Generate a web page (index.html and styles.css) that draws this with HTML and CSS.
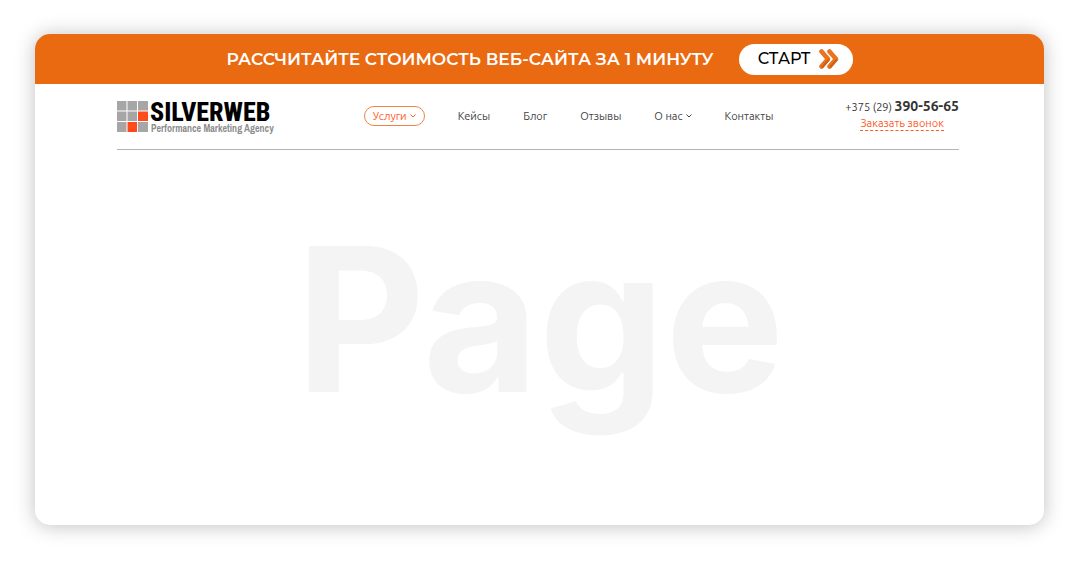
FILE: index.html
```html
<!DOCTYPE html>
<html lang="ru">
<head>
<meta charset="utf-8">
<meta name="viewport" content="width=device-width, initial-scale=1">
<title>SILVERWEB</title>
<link rel="stylesheet" href="styles.css">
</head>
<body>
<div class="card">
  <div class="banner">
    <span class="banner-text">РАССЧИТАЙТЕ СТОИМОСТЬ ВЕБ-САЙТА ЗА 1 МИНУТУ</span>
    <button class="start" type="button">СТАРТ
      <svg class="start-icon" width="20" height="20" viewBox="0 0 20 20" fill="none" stroke="#e9741f" stroke-width="4.600" stroke-linecap="round" stroke-linejoin="round"><path d="M2.500 2.500 9 10 2.500 17.500M10.500 2.500 17 10 10.500 17.500"/><path d="M9.500 11 3.500 18M17.500 11 11.500 18" stroke="#cf6016" stroke-width="2"/></svg>
    </button>
  </div>
  <header class="header">
    <a class="logo" href="#">
      <svg class="logo-mark" width="31" height="31" viewBox="0 0 31 31"><path fill="#a6a6a6" d="M0 0h9.500v9.500H0zM10.500 0H20v9.500h-9.500zM21 0h10v9.500H21zM0 10.500h9.500V20H0zM10.500 10.500H20V20h-9.500zM0 21h9.500v10H0zM21 21h10v10H21z"/><path fill="#ff4a1c" d="M21 10.500h10V20H21zM10.500 21H20v10h-9.500z"/></svg>
      <span class="logo-words"><span class="logo-name">SILVERWEB</span><span class="logo-tag">Performance Marketing Agency</span></span>
    </a>
    <nav class="nav">
      <a class="nav-link nav-active" href="#">Услуги<svg class="chevron" width="6" height="4" viewBox="0 0 6 4"><path d="M.5.500 3 3 5.500.500" fill="none" stroke="currentColor"/></svg></a>
      <a class="nav-link" href="#">Кейсы</a>
      <a class="nav-link" href="#">Блог</a>
      <a class="nav-link" href="#">Отзывы</a>
      <a class="nav-link" href="#">О нас<svg class="chevron" width="6" height="4" viewBox="0 0 6 4"><path d="M.5.500 3 3 5.500.500" fill="none" stroke="currentColor"/></svg></a>
      <a class="nav-link" href="#">Контакты</a>
    </nav>
    <div class="contact">
      <a class="phone" href="tel:+375293905665">+375 (29) <b class="phone-number">390-56-65</b></a>
      <a class="callback" href="#">Заказать звонок</a>
    </div>
  </header>
  <main class="content">Page</main>
</div>
</body>
</html>
```
FILE: styles.css
```css
* { box-sizing: border-box; }
body {
  margin: 0;
  min-height: 100vh;
  padding: 34px 36px 39px 35px;
  display: flex;
  background: #fff;
  color: #444;
  font-family: "Ubuntu", "Roboto", sans-serif;
  font-size: 11px;
}
a { color: inherit; text-decoration: none; }
.card {
  flex: 1;
  display: flex;
  flex-direction: column;
  overflow: hidden;
  border-radius: 15px;
  background: #fff;
  box-shadow: 0 1px 20px rgba(0, 0, 0, 0.25);
}
.banner {
  display: flex;
  align-items: center;
  justify-content: center;
  gap: 25px;
  height: 50px;
  background: #ea6a12;
}
.banner-text {
  color: #fff;
  font: 600 17px/24px "Montserrat", "Lato", sans-serif;
}
.start {
  display: flex;
  align-items: center;
  gap: 8px;
  height: 31px;
  padding: 0 14px 0 19px;
  border: 0;
  border-radius: 16px;
  background: #fff;
  color: #000;
  font: 500 16px/24px "Montserrat", "Lato", sans-serif;
}
.header {
  display: flex;
  align-items: center;
  justify-content: space-between;
  height: 66px;
  margin: 0 85px 0 82px;
  border-bottom: 1px solid #b5b5b5;
}
.logo {
  display: flex;
  align-items: center;
  gap: 2px;
}
.logo-words { display: flex; flex-direction: column; }
.logo-name {
  color: #000;
  font: 800 26px/24px "Roboto Condensed", "Roboto", sans-serif;
}
.logo-tag {
  padding-left: 1px;
  color: #8c8c8c;
  font: 700 10px/10px "Archivo Narrow", "Roboto Condensed", sans-serif;
}
.nav {
  display: flex;
  align-items: center;
  gap: 33px;
  padding: 0 0 1px 18px;
}
.nav-link {
  display: flex;
  align-items: center;
  gap: 3px;
  line-height: 18px;
}
.nav-active {
  padding: 0 8px;
  border: 1px solid #f28243;
  border-radius: 10px;
  color: #ff5a26;
}
.contact {
  display: flex;
  flex-direction: column;
  align-items: center;
  padding-bottom: 5px;
}
.phone { color: #333; line-height: 18px; }
.phone-number { font-size: 14px; }
.callback {
  border-bottom: 1px dashed #ff5a26;
  color: #ff5a26;
  line-height: 14px;
}
.content {
  flex: 1;
  display: flex;
  align-items: center;
  justify-content: center;
  padding: 0 0 37px 1px;
  color: #f4f4f4;
  font: 700 200px/240px "Inter", sans-serif;
}
```
